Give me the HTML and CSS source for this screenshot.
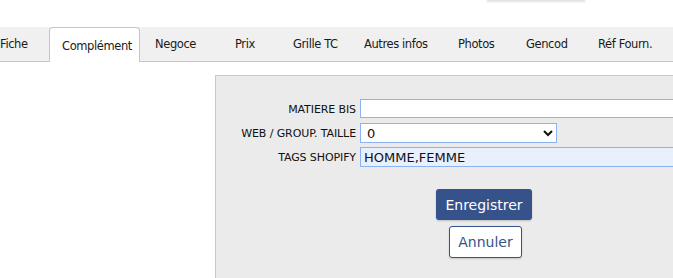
FILE: index.html
```html
<!DOCTYPE html>
<html lang="fr">
<head>
  <meta charset="UTF-8" />
  <title>Article - Complément</title>
  <link rel="stylesheet" href="styles.css">
</head>
<body>
  <div class="topbar">
    <div class="topbox"></div>
  </div>

  <nav class="tabs">
    <a class="tab tab-fiche">Fiche</a>
    <a class="tab tab-complement active">Complément</a>
    <a class="tab tab-negoce">Negoce</a>
    <a class="tab tab-prix">Prix</a>
    <a class="tab tab-grille">Grille TC</a>
    <a class="tab tab-autres">Autres infos</a>
    <a class="tab tab-photos">Photos</a>
    <a class="tab tab-gencod">Gencod</a>
    <a class="tab tab-ref">Réf Fourn.</a>
  </nav>

  <div class="content">
    <form class="panel">
      <div class="fields">
        <label class="lbl" for="matiere">MATIERE BIS</label>
        <input class="field field-wide" type="text" id="matiere" />

        <label class="lbl" for="taille">WEB / GROUP. TAILLE</label>
        <select class="field field-select" id="taille">
          <option>0</option>
          <option>1</option>
          <option>2</option>
        </select>

        <label class="lbl" for="tags">TAGS SHOPIFY</label>
        <input class="field field-wide filled" type="text" id="tags" value="HOMME,FEMME" />
      </div>

      <div class="actions">
        <button type="button" class="btn btn-save">Enregistrer</button>
        <button type="button" class="btn btn-cancel">Annuler</button>
      </div>
    </form>
  </div>
</body>
</html>
```
FILE: styles.css
```css
body {
  margin: 0;
  font-family: 'DejaVu Sans', Tahoma, Verdana, sans-serif;
  font-size: 11px;
  color: #111;
  background: #fff;
  height: 278px;
  overflow: hidden;
}
.topbar {
  height: 27px;
}
.topbox {
  margin-left: 487px;
  width: 98px;
  height: 1px;
  background: #e4e4e4;
  box-shadow: 0 1px 2px rgba(0,0,0,0.18);
}
.tabs {
  display: grid;
  grid-template-columns: 49px 91px 80px 58px 71px 94px 68px 72px 1fr;
  height: 34px;
  background: #f0f0f0;
  border-bottom: 1px solid #c6c6c6;
}
.tab {
  display: flex;
  align-items: center;
  padding-left: 15px;
  font-size: 11.5px;
  letter-spacing: -0.4px;
  color: #1a1a1a;
  cursor: pointer;
  white-space: nowrap;
  overflow: hidden;
}
.tab-fiche {
  padding-left: 0;
}
.tab.active {
  padding-left: 12px;
  background: #fff;
  border: 1px solid #c6c6c6;
  border-bottom: none;
  border-radius: 4px 4px 0 0;
  margin-bottom: -1px;
  padding-top: 2px;
}
.content {
  padding: 13px 0 0 215px;
  overflow: hidden;
}
.panel {
  box-sizing: border-box;
  height: 203px;
  overflow: hidden;
  background: #ebebeb;
  border-top: 1px solid #c8c8c8;
  border-left: 1px solid #c8c8c8;
  padding-top: 23px;
}
.fields {
  display: grid;
  grid-template-columns: 140px 1fr;
  grid-auto-rows: 20px;
  column-gap: 4px;
  row-gap: 4px;
  align-items: start;
}
.lbl {
  align-self: center;
  text-align: right;
  letter-spacing: -0.1px;
  white-space: nowrap;
}
.field {
  box-sizing: border-box;
  height: 20px;
  border: 1px solid #8db2f2;
  background: #fff;
  font-family: inherit;
  font-size: 13px;
  padding: 0 3px;
  outline: none;
  color: #111;
}
.field-wide {
  width: 420px;
}
#matiere {
  height: 19px;
}
.field-select {
  width: 197px;
  padding: 0 2px;
}
.filled {
  background: #e8f0fe;
}
.actions {
  width: 536px;
  display: flex;
  flex-direction: column;
  align-items: center;
  gap: 6px;
  margin-top: 22px;
}
.btn {
  font-family: inherit;
  font-size: 14px;
  border-radius: 3px;
  cursor: pointer;
}
.btn-save {
  width: 96px;
  height: 31px;
  background: #36528a;
  color: #fff;
  border: none;
  box-shadow: 0 1px 2px rgba(0,0,0,0.2);
}
.btn-save:hover {
  background: #2b4270;
}
.btn-cancel {
  width: 73px;
  height: 32px;
  margin-left: 3px;
  background: #fff;
  color: #36528a;
  border: 1px solid #36528a;
  box-shadow: 0 1px 2px rgba(0,0,0,0.15);
}
```
